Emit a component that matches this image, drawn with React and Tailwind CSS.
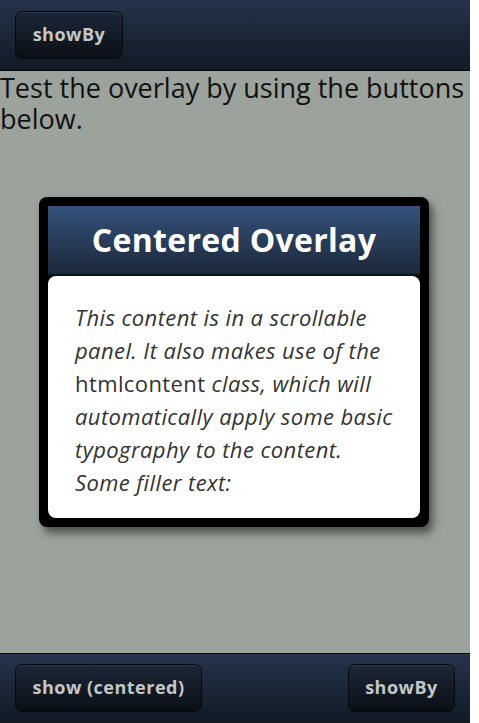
import React from "react";

const font = { fontFamily: '"Open Sans", "Noto Sans", sans-serif' };

function BarButton({ children, className = "" }) {
  return (
    <button
      className={`h-[48px] rounded-[7px] border border-[#05080c] bg-gradient-to-b from-[#1c2838] to-[#0a0f15] text-[18px] font-bold tracking-[0.5px] text-[#c4c6c8] shadow-[inset_0_1px_0_rgba(255,255,255,0.08)] ${className}`}
    >
      {children}
    </button>
  );
}

export default function App() {
  return (
    <div className="flex h-[723px] w-[479px] bg-white" style={font}>
      <div className="flex h-full w-[470px] flex-col">
        {/* Top bar */}
        <div className="flex h-[71px] items-center border-b border-[#05080c] bg-gradient-to-b from-[#25344c] to-[#111a25] px-[15px] pb-[1px]">
          <BarButton className="w-[108px]">showBy</BarButton>
        </div>

        {/* Content */}
        <div className="relative flex-1 bg-[#9ca29c]">
          <p className="pt-[1px] text-[27px] leading-[31px] text-[#111]">
            Test the overlay by using the buttons below.
          </p>

          {/* Overlay */}
          <div className="absolute left-[39px] top-[126px] w-[390px] rounded-[8px] bg-black p-[9px] shadow-[4px_6px_8px_rgba(40,45,40,0.7)]">
            <div className="flex h-[70px] items-center justify-center border-b-2 border-[#0c121a] bg-gradient-to-b from-[#36527c] to-[#1c283a]">
              <h2 className="text-[32px] font-bold tracking-[0.3px] text-white">Centered Overlay</h2>
            </div>
            <div className="rounded-[8px] bg-white px-[27px] pb-[19px] pt-[25px] text-[22px] leading-[33px] tracking-[0.4px] text-[#333]">
              <i>This content is in a scrollable panel. It also makes use of the </i>
              htmlcontent
              <i> class, which will automatically apply some basic typography to the content. Some filler text:</i>
            </div>
          </div>
        </div>

        {/* Bottom bar */}
        <div className="flex h-[70px] items-center justify-between border-t border-[#05080c] bg-gradient-to-b from-[#25344c] to-[#111a25] px-[15px] pb-[2px]">
          <BarButton className="w-[187px]">show (centered)</BarButton>
          <BarButton className="w-[107px]">showBy</BarButton>
        </div>
      </div>
    </div>
  );
}
